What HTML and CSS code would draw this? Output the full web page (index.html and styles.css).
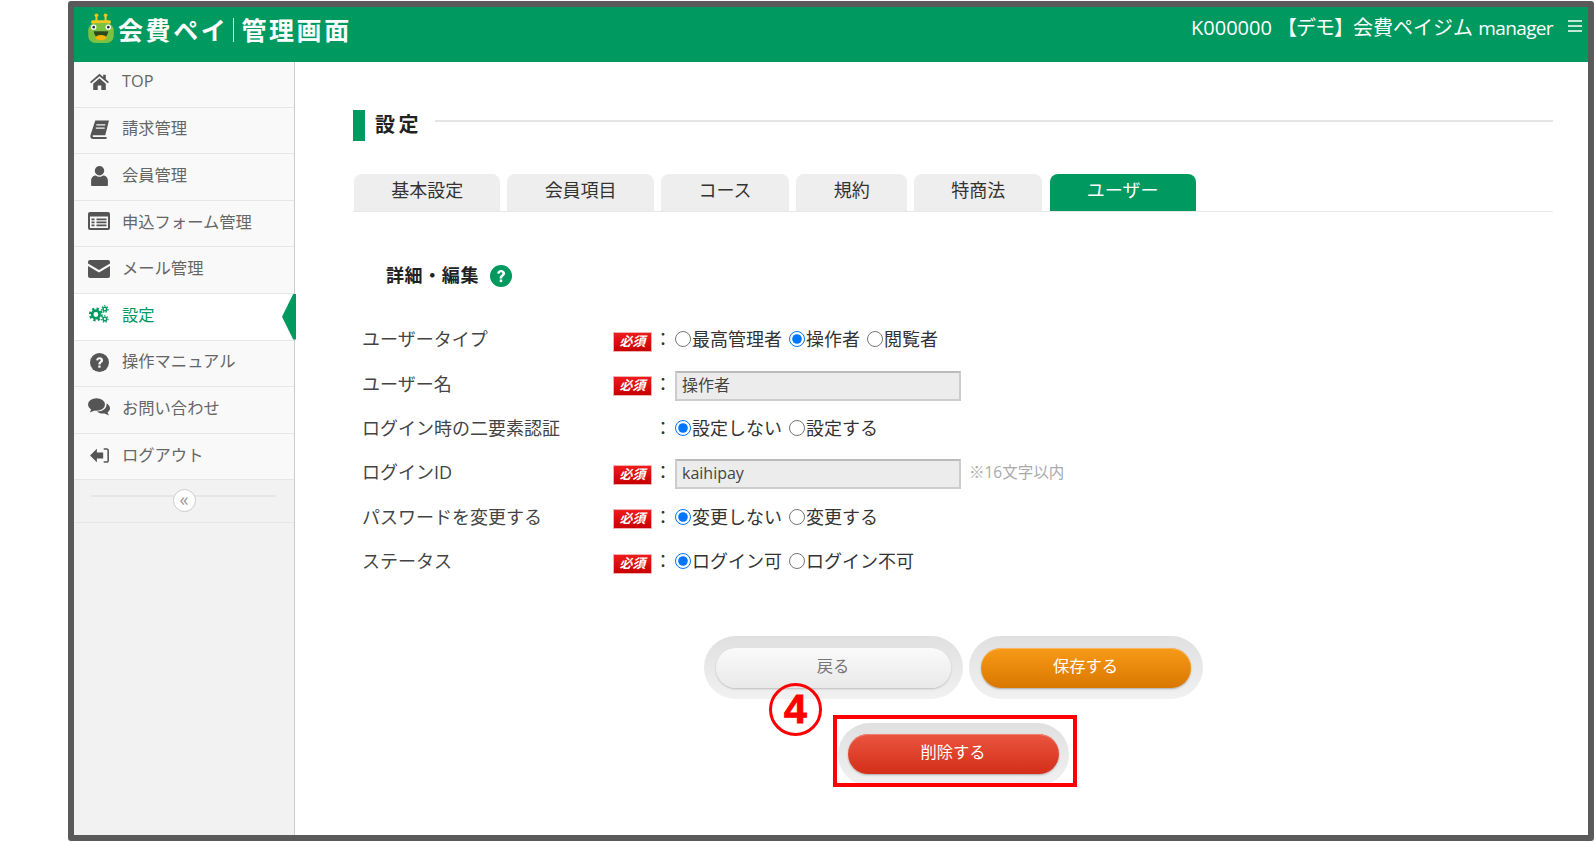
FILE: index.html
```html
<!DOCTYPE html>
<html lang="ja">
<head>
<meta charset="utf-8">
<title>会費ペイ 管理画面</title>
<link rel="stylesheet" href="styles.css">
</head>
<body>
<div class="frame">
  <header class="topbar">
    <div class="brand">
      <svg class="frog" viewBox="0 0 30 34">
        <path d="M10 2v8M20 2v8" stroke="#f2c81e" stroke-width="2.2"/>
        <circle cx="10" cy="2.500" r="2" fill="#f2c81e"/><circle cx="20" cy="2.500" r="2" fill="#f2c81e"/>
        <rect x="4" y="8" width="22" height="4" rx="2" fill="#f2c81e"/>
        <rect x="1" y="11" width="28" height="22" rx="8" fill="#7cc142"/>
        <circle cx="7" cy="15.500" r="3" fill="#fff"/><circle cx="23" cy="15.500" r="3" fill="#fff"/>
        <circle cx="7" cy="15.500" r="1.400" fill="#234"/><circle cx="23" cy="15.500" r="1.400" fill="#234"/>
        <path d="M7 20h16q-1 8-8 8t-8-8z" fill="#2d4a1e"/>
        <ellipse cx="15" cy="27" rx="6" ry="3" fill="#f5b400"/>
      </svg>
      <span class="brand-name">会費ペイ</span>
      <span class="brand-sep"></span>
      <span class="brand-name">管理画面</span>
    </div>
    <div class="account">
      <span>K000000 <span class="brk">【デモ】</span>会費ペイジム <span class="mgr">manager</span></span>
      <svg class="burger" viewBox="0 0 14 14"><path d="M0 2h14M0 7h14M0 12h14" stroke="#fff" stroke-width="1.6"/></svg>
    </div>
  </header>
  <div class="body-row">
    <nav class="sidebar">
      <a class="nav-item"><svg class="nav-icon" viewBox="0 0 20 20"><path d="M10 2.5 1 10.5l1 1.2L10 5l8 6.7 1-1.2-3-2.7V3.5h-2.5v2.2zM4 12.2 10 7l6 5.2V18h-4.3v-4.3H8.3V18H4z"/></svg>TOP</a>
      <a class="nav-item"><svg class="nav-icon" viewBox="0 0 20 20"><path d="M6 1.500h13l-3.500 14H3.700c-.5 1 0 1.700 1 1.700h12.300l-.5 1.800H3.500C1.500 19 .9 17 1.500 15zM7 5v1.300h8.500V5zM6.500 8v1.300H15V8z" fill-rule="evenodd"/></svg>請求管理</a>
      <a class="nav-item"><svg class="nav-icon" viewBox="0 0 20 20"><circle cx="10" cy="5.500" r="4.500"/><path d="M2 19v-4c0-3 2-5 4.500-5 1 .8 2.200 1.300 3.500 1.300s2.500-.5 3.500-1.300c2.500 0 4.500 2 4.500 5v4c0 .5-.5 1-1 1H3c-.5 0-1-.5-1-1z"/></svg>会員管理</a>
      <a class="nav-item"><svg class="nav-icon wide" viewBox="0 0 22 18"><path fill-rule="evenodd" d="M2 0h18a2 2 0 0 1 2 2v14a2 2 0 0 1-2 2H2a2 2 0 0 1-2-2V2a2 2 0 0 1 2-2zM2 4.500V16h18V4.500zM3.500 6.500h3v1.800h-3zm5 0h10v1.800h-10zm-5 3h3v1.800h-3zm5 0h10v1.800h-10zm-5 3h3v1.800h-3zm5 0h10v1.800h-10z"/></svg>申込フォーム管理</a>
      <a class="nav-item"><svg class="nav-icon wide mail" viewBox="0 0 22 18"><path d="M2 0h18a2 2 0 0 1 2 2v1.500L11 10 0 3.500V2a2 2 0 0 1 2-2zM0 6l11 6.500L22 6v10a2 2 0 0 1-2 2H2a2 2 0 0 1-2-2z"/></svg>メール管理</a>
      <a class="nav-item active"><svg class="nav-icon wide" viewBox="0 0 22 20">
          <circle cx="7.500" cy="10.500" r="4.200" fill="none" stroke="currentColor" stroke-width="3"/>
          <circle cx="7.500" cy="10.500" r="6.500" fill="none" stroke="currentColor" stroke-width="2.400" stroke-dasharray="2.600 2.500"/>
          <circle cx="17.500" cy="4.500" r="2" fill="none" stroke="currentColor" stroke-width="1.600"/>
          <circle cx="17.500" cy="4.500" r="3.500" fill="none" stroke="currentColor" stroke-width="1.400" stroke-dasharray="1.600 1.450"/>
          <circle cx="17.500" cy="15.500" r="2" fill="none" stroke="currentColor" stroke-width="1.600"/>
          <circle cx="17.500" cy="15.500" r="3.500" fill="none" stroke="currentColor" stroke-width="1.400" stroke-dasharray="1.600 1.450"/>
        </svg>設定</a>
      <a class="nav-item"><svg class="nav-icon" viewBox="0 0 20 20"><circle cx="10" cy="10" r="9"/><path d="M6.800 7.800C7 6 8.300 5 10.100 5c1.900 0 3.300 1.100 3.300 2.800 0 2.300-2.400 2.300-2.400 4.100H8.900c0-2.800 2.200-2.800 2.200-4 0-.6-.5-1-1.100-1-.7 0-1.100.5-1.200 1.200z" fill="#f9f9f9"/><rect x="8.900" y="12.800" width="2.100" height="2.200" fill="#f9f9f9"/></svg>操作マニュアル</a>
      <a class="nav-item"><svg class="nav-icon wide" viewBox="0 0 22 18"><ellipse cx="8.500" cy="6.500" rx="8.500" ry="6.200"/><path d="M3.500 10 2 14.500 7.500 12z"/><path d="M18.500 5.500c2 1 3.500 2.700 3.500 4.700 0 1.700-1 3.200-2.500 4.200l1.500 3.100-4.500-2.100c-3 .5-6-.3-7.700-1.900 5.500.2 10.500-3 9.700-8z"/></svg>お問い合わせ</a>
      <a class="nav-item"><svg class="nav-icon" viewBox="0 0 20 20"><path d="M1 10l6.500-6.500v3.700h6v5.600h-6v3.700z"/><path d="M14 3h3c1 0 2 1 2 2v10c0 1-1 2-2 2h-3v-1.500h3c.3 0 .5-.2.500-.5V5c0-.3-.2-.5-.5-.5h-3z"/></svg>ログアウト</a>
      <div class="collapse">
        <span class="collapse-line"></span>
        <span class="collapse-btn">«</span>
      </div>
    </nav>
    <main class="content">
      <div class="page-title">
        <span class="title-bar"></span>
        <h1 class="title-text">設定</h1>
        <span class="title-line"></span>
      </div>
      <div class="tabs">
        <a class="tab w1">基本設定</a>
        <a class="tab w1">会員項目</a>
        <a class="tab w2">コース</a>
        <a class="tab w3">規約</a>
        <a class="tab w2">特商法</a>
        <a class="tab w1 current">ユーザー</a>
      </div>
      <h2 class="section-head">詳細・編集
        <svg class="help" viewBox="0 0 20 20"><circle cx="10" cy="10" r="10" fill="#00995f"/><path d="M6.500 7.800C6.700 5.800 8.100 4.600 10.100 4.600c2.100 0 3.600 1.200 3.600 3 0 2.500-2.600 2.600-2.600 4.600H8.800c0-3 2.400-3 2.400-4.400 0-.7-.5-1.100-1.200-1.100-.8 0-1.200.5-1.300 1.300z" fill="#fff"/><rect x="8.800" y="13.200" width="2.300" height="2.400" fill="#fff"/></svg>
      </h2>
      <div class="form">
        <div class="row">
          <span class="label">ユーザータイプ</span><span class="badge">必須</span><span class="colon">：</span>
          <span class="value">
            <label class="opt"><input type="radio" name="t">最高管理者</label>
            <label class="opt"><input type="radio" name="t" checked>操作者</label>
            <label class="opt"><input type="radio" name="t">閲覧者</label>
          </span>
        </div>
        <div class="row">
          <span class="label">ユーザー名</span><span class="badge">必須</span><span class="colon">：</span>
          <span class="value"><input class="field" type="text" value="操作者" readonly></span>
        </div>
        <div class="row">
          <span class="label">ログイン時の二要素認証</span><span class="no-badge"></span><span class="colon">：</span>
          <span class="value">
            <label class="opt"><input type="radio" name="a" checked>設定しない</label>
            <label class="opt"><input type="radio" name="a">設定する</label>
          </span>
        </div>
        <div class="row">
          <span class="label">ログインID</span><span class="badge">必須</span><span class="colon">：</span>
          <span class="value"><input class="field" type="text" value="kaihipay" readonly><span class="hint">※16文字以内</span></span>
        </div>
        <div class="row">
          <span class="label">パスワードを変更する</span><span class="badge">必須</span><span class="colon">：</span>
          <span class="value">
            <label class="opt"><input type="radio" name="p" checked>変更しない</label>
            <label class="opt"><input type="radio" name="p">変更する</label>
          </span>
        </div>
        <div class="row">
          <span class="label">ステータス</span><span class="badge">必須</span><span class="colon">：</span>
          <span class="value">
            <label class="opt"><input type="radio" name="s" checked>ログイン可</label>
            <label class="opt"><input type="radio" name="s">ログイン不可</label>
          </span>
        </div>
      </div>
      <div class="actions">
        <span class="pill-wrap back-wrap"><button class="pill back">戻る</button></span>
        <span class="pill-wrap save-wrap"><button class="pill save">保存する</button></span>
      </div>
      <div class="actions second">
        <span class="pill-wrap del-wrap"><button class="pill del">削除する</button></span>
      </div>
    </main>
  </div>
  <div class="mark-rect"></div>
  <div class="mark-num">4</div>
</div>
</body>
</html>
```
FILE: styles.css
```css
* { box-sizing: border-box; }
html, body { margin: 0; padding: 0; background: #fff; }
body {
  font-family: "Open Sans", "Noto Sans CJK JP", sans-serif;
  color: #333;
  overflow: hidden;
}
.frame {
  position: relative;
  width: 1526px;
  height: 840px;
  margin: 1px 0 0 68px;
  border: 6px solid #5a5a5a;
  border-radius: 3px;
  display: flex;
  flex-direction: column;
}
.topbar {
  height: 55px;
  flex: none;
  background: #00995f;
  color: #fff;
  display: flex;
  justify-content: space-between;
  padding: 0 6px 0 13px;
}
.brand { display: flex; align-items: center; height: 43px; }
.frog { width: 28px; height: 31px; margin-right: 3px; }
.brand-name {
  font-family: "Noto Sans CJK JP", sans-serif;
  font-size: 25px;
  font-weight: 700;
  letter-spacing: 2.6px;
  line-height: 1;
  margin-top: 2px;
}
.brand-sep { width: 1px; height: 24px; background: #cfe9dd; margin: 2px 7px 0 5px; }
.account { display: flex; align-items: flex-start; font-size: 20px; line-height: 27px; padding-top: 7px; }
.brk { letter-spacing: -1px; }
.mgr { font-size: 19px; letter-spacing: -.63px; }
.burger { width: 14px; height: 14px; margin: 5px 0 0 15px; }
.body-row { flex: 1; display: flex; min-height: 0; }
.sidebar {
  width: 221px;
  flex: none;
  background: #f2f2f2;
  border-right: 1px solid #ccc;
  display: flex;
  flex-direction: column;
}
.nav-item {
  position: relative;
  height: 46.6px;
  flex: none;
  display: flex;
  align-items: center;
  padding: 0 0 6px 48px;
  background: #f9f9f9;
  border-bottom: 1px solid #e6e6e6;
  font-size: 16.3px;
  color: #666;
}
.nav-item:first-child { height: 45.6px; }
.nav-item:first-child .nav-icon { top: 9px; }
.nav-item.active { background: #fff; color: #00995f; }
.nav-item.active::after {
  content: "";
  position: absolute;
  right: -2px;
  top: 0;
  bottom: 0;
  width: 14px;
  background: #00995f;
  clip-path: polygon(100% 0, 100% 100%, 80% 100%, 0 50%, 80% 0);
}
.nav-icon {
  position: absolute;
  left: 15px;
  top: 11px;
  width: 21px;
  height: 21px;
  fill: currentColor;
  color: #555;
}
.nav-icon.wide { left: 14px; width: 22px; height: 18px; }
.nav-icon.mail { top: 13px; }
.active .nav-icon { color: #00995f; }
.collapse {
  position: relative;
  height: 43px;
  flex: none;
  border-bottom: 1px solid #e6e6e6;
  display: flex;
  justify-content: center;
}
.collapse-line {
  position: absolute;
  left: 17px;
  right: 18px;
  top: 15px;
  height: 2px;
  background: #e6e6e6;
}
.collapse-btn {
  position: relative;
  width: 23px;
  height: 23px;
  margin-top: 9px;
  background: #fff;
  border: 1px solid #ccc;
  border-radius: 50%;
  font-size: 18px;
  line-height: 19px;
  text-align: center;
  color: #999;
}
.content { flex: 1; min-width: 0; padding: 48px 35px 0 58px; background: #fff; }
.page-title { display: flex; height: 31px; }
.title-bar { width: 12px; background: #00995f; }
.title-text {
  margin: 0 13px 0 10px;
  font-family: "Noto Sans CJK JP", sans-serif;
  font-size: 20px;
  line-height: 28px;
  font-weight: 700;
  letter-spacing: 3.4px;
  color: #222;
}
.title-line { flex: 1; height: 2px; margin-top: 10px; background: #e4e4e4; }
.tabs {
  display: flex;
  gap: 7.2px;
  margin-top: 33px;
  padding-left: 1px;
  border-bottom: 1px solid #e8e8e8;
}
.tab {
  height: 37px;
  background: #eee;
  border-radius: 8px 8px 0 0;
  text-align: center;
  font-size: 18px;
  line-height: 32px;
  color: #333;
}
.w1 { width: 146.3px; }
.w2 { width: 128px; }
.w3 { width: 111px; }
.tab.current { background: #00995f; color: #fff; }
.section-head {
  display: flex;
  align-items: center;
  gap: 11px;
  height: 26px;
  margin: 49px 0 0 33px;
  font-size: 18px;
  font-weight: 700;
  color: #222;
  letter-spacing: .6px;
}
.help { width: 22px; height: 22px; margin-top: 4px; }
.form { margin: 30px 0 0 9px; }
.row {
  display: grid;
  grid-template-columns: 251px 39px 23px 1fr;
  align-items: center;
  height: 44.4px;
  font-size: 18px;
  line-height: 26px;
  color: #444;
}
.badge {
  height: 20px;
  margin-top: 5px;
  background: linear-gradient(#ee1c1c, #c80000);
  border: 1px solid #f2b0b0;
  color: #fff;
  font-size: 13px;
  font-weight: 700;
  font-style: italic;
  line-height: 18px;
  text-align: center;
  font-family: "Liberation Serif", "Noto Sans CJK JP", serif;
}
.colon { font-size: 18px; color: #333; margin-left: 2px; }
.value { display: flex; align-items: center; gap: 7px; }
.opt { display: inline-flex; align-items: center; color: #333; }
.opt input { width: 16px; height: 16px; margin: 0 1px 0 0; accent-color: #0075ff; }
.field {
  width: 286px;
  height: 30px;
  margin-top: 4px;
  padding: 0 5px 3px;
  border: 2px solid #ccc;
  border-top-color: #bbb;
  background: #ececec;
  font-family: "Open Sans", "Noto Sans CJK JP", sans-serif;
  font-size: 16px;
  color: #444;
  outline: none;
}
.hint { margin-left: 1px; font-size: 15.500px; color: #aaa; }
.actions { display: flex; justify-content: center; gap: 6px; margin-top: 53px; }
.actions.second { margin-top: 24px; }
.pill-wrap {
  display: block;
  height: 63px;
  padding: 12px 11px;
  border-radius: 32px;
  background: linear-gradient(#e0e0e0, #f1f1f1);
}
.back-wrap { width: 259px; padding-left: 12px; padding-right: 12px; }
.save-wrap { width: 234px; padding-left: 12px; padding-right: 12px; }
.del-wrap { width: 231px; padding: 11px 10px; }
.pill {
  display: block;
  width: 100%;
  height: 40px;
  border-radius: 20px;
  border: 0;
  font-family: "Noto Sans CJK JP", sans-serif;
  font-size: 16.300px;
  line-height: 34px;
  padding: 0 0 6px;
}
.back {
  background: linear-gradient(#fafafa, #e9e9e9);
  color: #777;
  box-shadow: 0 1px 2px #bbb;
}
.save {
  background: linear-gradient(#f89a18, #d87800);
  color: #fff;
  box-shadow: inset 0 1px 0 #f9b860, 0 1px 2px #aaa;
}
.del {
  background: linear-gradient(#ea5540, #d32e18);
  color: #fff;
  box-shadow: inset 0 1px 0 #f08070, 0 1px 2px #aaa;
}
.mark-rect {
  position: absolute;
  left: 759px;
  top: 708px;
  width: 244px;
  height: 72px;
  border: 4px solid #f00;
}
.mark-num {
  position: absolute;
  left: 695px;
  top: 676px;
  width: 53px;
  height: 53px;
  border: 3px solid #f00;
  border-radius: 50%;
  color: #f00;
  font-family: "Liberation Sans", sans-serif;
  font-weight: 700;
  font-size: 41px;
  line-height: 46px;
  text-align: center;
  -webkit-text-stroke: 1px #f00;
}
```
